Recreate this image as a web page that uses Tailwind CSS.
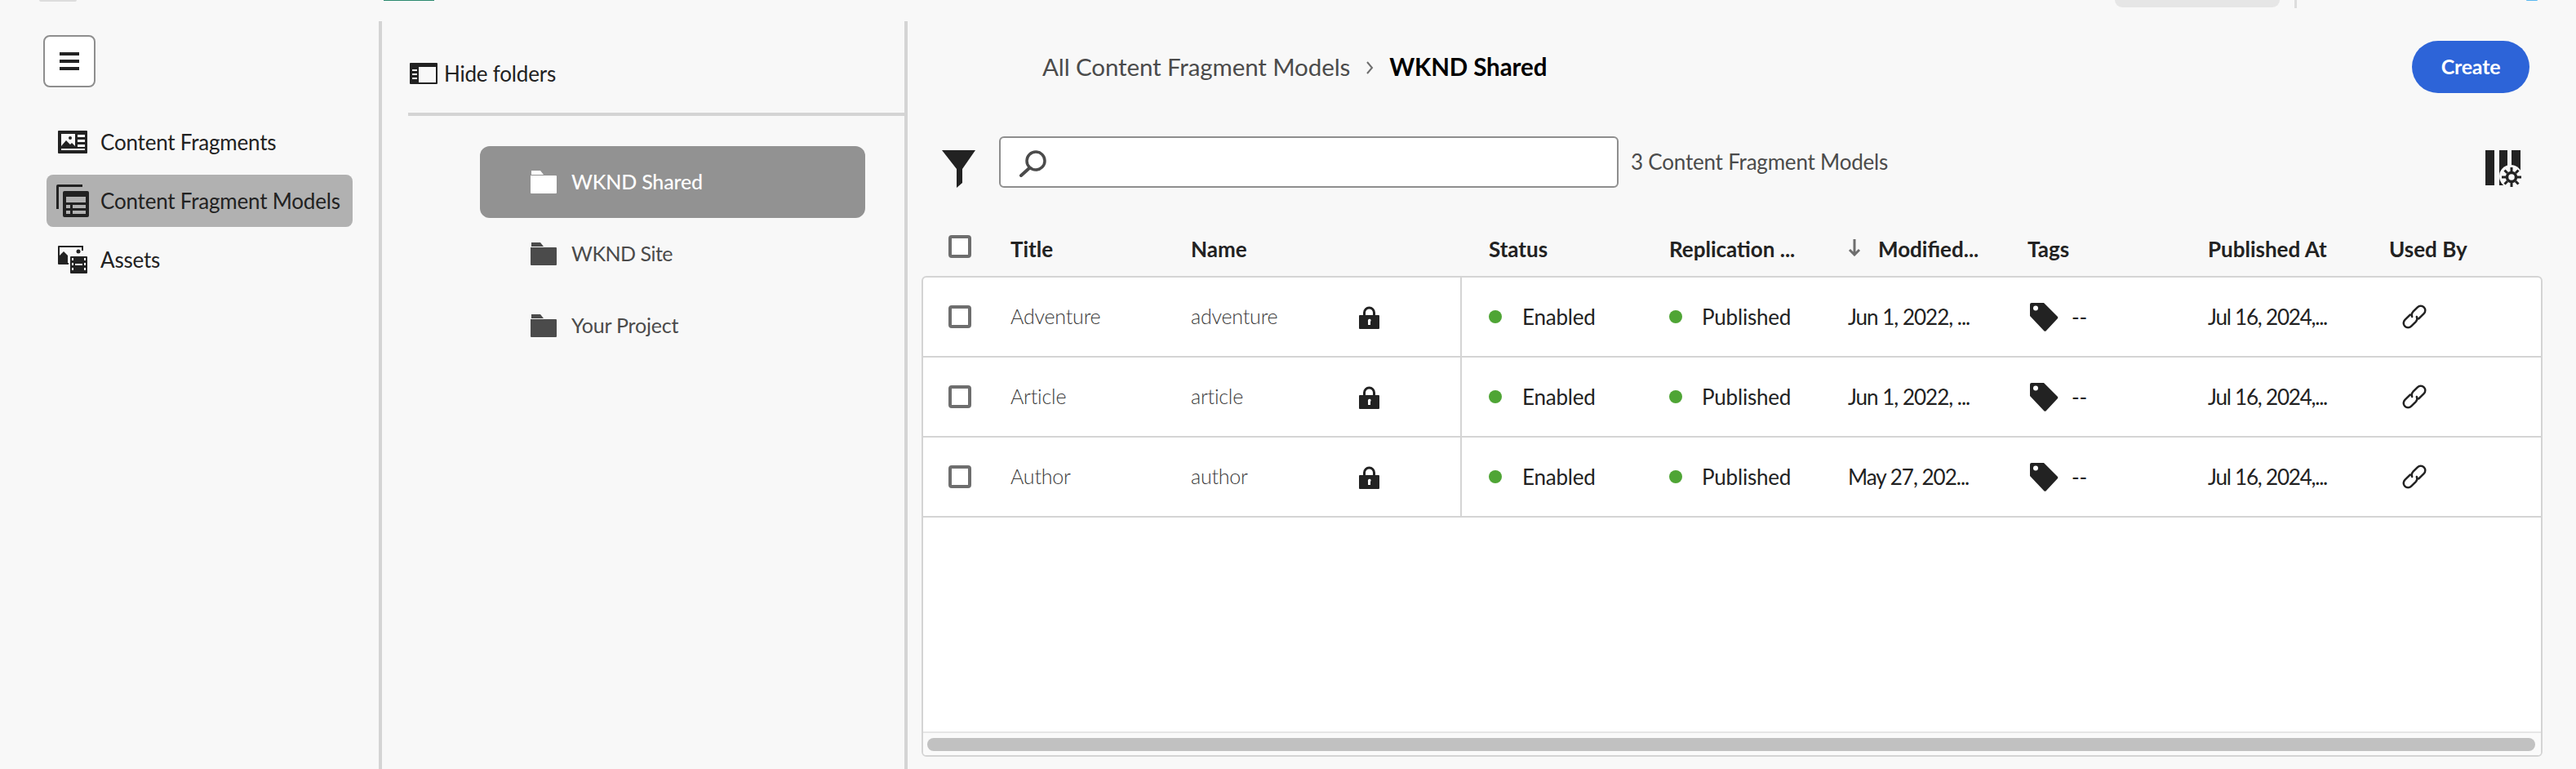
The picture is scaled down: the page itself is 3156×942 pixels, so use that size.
<!DOCTYPE html>
<html lang="en">
<head>
    <meta charset="UTF-8">
    <title>Content Fragment Models</title>
    <script src="https://cdn.jsdelivr.net/npm/@tailwindcss/browser@4"></script>
</head>
<body class="bg-[#f8f8f8] font-['Lato',sans-serif] text-[26px] tracking-[-0.2px] text-[#222222] overflow-hidden">
<div class="relative h-[942px] w-[3156px] overflow-hidden">
    <!-- Top bar leftovers -->
    <div class="absolute left-[48px] top-0 h-[2px] w-[46px] rounded-b bg-[#dddddd]"></div>
    <div class="absolute left-[470px] top-0 h-[1px] w-[62px] bg-[#2d8a6f]"></div>
    <div class="absolute left-[2591px] top-0 h-[9px] w-[202px] rounded-b-[10px] bg-[#e6e6e6]"></div>
    <div class="absolute left-[2811px] top-0 h-[10px] w-[3px] bg-[#dddddd]"></div>
    <div class="absolute left-[3095px] top-0 h-[1px] w-[14px] rounded-b bg-[#5bb8f0]"></div>

    <div class="flex h-full pt-[26px]">
        <!-- Nav rail -->
        <div class="w-[468px] h-full shrink-0 border-r-4 border-[#d4d4d4] pl-[53px] pt-[17px]">
            <button class="flex h-[64px] w-[64px] flex-col items-center justify-center gap-[5px] rounded-lg border-2 border-[#8e8e8e] bg-white">
                <span class="h-[4px] w-[24px] bg-[#222222]"></span>
                <span class="h-[4px] w-[24px] bg-[#222222]"></span>
                <span class="h-[4px] w-[24px] bg-[#222222]"></span>
            </button>
            <ul class="mt-[35px] ml-[4px] flex w-[375px] flex-col gap-[8px]">
                <li class="flex h-[64px] items-center pl-[14px]">
                    <svg class="w-[36px] h-[28px] mr-[16px] shrink-0" viewBox="0 0 36 28"><path fill="#222222" fill-rule="evenodd" d="M1 0h34a1 1 0 0 1 1 1v26a1 1 0 0 1-1 1H1a1 1 0 0 1-1-1V1a1 1 0 0 1 1-1zM4 4v15l6-7 5 5 2-2 4 4V4zM24 5v3h9V5zM24 11v3h9v-3zM24 17v3h9v-3zM4 22v2h29v-2z"/><circle cx="15" cy="9" r="2" fill="#222222"/></svg>
                    <span>Content Fragments</span>
                </li>
                <li class="flex h-[64px] items-center rounded-lg bg-[#b1b1b1] pl-[12px]">
                    <svg class="w-[40px] h-[40px] mr-[14px] shrink-0" viewBox="0 0 40 40"><path fill="#222222" d="M2 0h30v3H3v27H0V2a2 2 0 0 1 2-2z"/><path fill="#222222" fill-rule="evenodd" d="M10 8h28a2 2 0 0 1 2 2v28a2 2 0 0 1-2 2H10a2 2 0 0 1-2-2V10a2 2 0 0 1 2-2zM12 15v7h24v-7zM12 25v4h5v-4zM20 25v4h16v-4zM12 32v4h5v-4zM20 32v4h16v-4z"/></svg>
                    <span>Content Fragment Models</span>
                </li>
                <li class="flex h-[64px] items-center pl-[14px]">
                    <svg class="w-[36px] h-[34px] mr-[16px] shrink-0" viewBox="0 0 36 34"><path fill="#222222" d="M1 0h30v6h-2V2H2v19h11v2H1a1 1 0 0 1-1-1V1a1 1 0 0 1 1-1z"/><path fill="#222222" d="M2 12l5-5 5 5v9H2z"/><circle cx="25" cy="7" r="2.5" fill="#222222"/><path fill="#222222" fill-rule="evenodd" d="M16 13h19a1 1 0 0 1 1 1v19a1 1 0 0 1-1 1H16a1 1 0 0 1-1-1V14a1 1 0 0 1 1-1zM17 15v3h2v-3zM32 15v3h2v-3zM17 21v3h2v-3zM32 21v3h2v-3zM17 27v3h2v-3zM32 27v3h2v-3zM21 22v2h9v-2z"/></svg>
                    <span>Assets</span>
                </li>
            </ul>
        </div>

        <!-- Folders -->
        <div class="w-[644px] h-full shrink-0 border-r-4 border-[#d4d4d4] pl-[32px]">
            <div class="flex h-[116px] items-start border-b-4 border-[#d4d4d4] pt-[51px] pl-[2px]">
                <svg class="w-[34px] h-[26px] mr-[8px] shrink-0" viewBox="0 0 34 26"><path fill="#222222" fill-rule="evenodd" d="M1 0h32a1 1 0 0 1 1 1v24a1 1 0 0 1-1 1H1a1 1 0 0 1-1-1V1a1 1 0 0 1 1-1zM11 5v19h21V5zM3 8v2h6V8zM3 13v2h6v-2zM3 18v2h6v-2z"/></svg>
                <span class="leading-[26px]">Hide folders</span>
            </div>
            <ul class="mt-[37px] ml-[88px] w-[472px] text-[25px]">
                <li class="flex h-[88px] items-center rounded-xl bg-[#929292] pl-[62px] text-white">
                    <svg class="w-[32px] h-[28px] mr-[18px] shrink-0" viewBox="0 0 32 28"><path fill="#ffffff" d="M1 0h11l4 5H1zM0 6h31a1 1 0 0 1 1 1v20a1 1 0 0 1-1 1H1a1 1 0 0 1-1-1z"/></svg>
                    <span class="font-medium">WKND Shared</span>
                </li>
                <li class="flex h-[88px] items-center pl-[62px] text-[#4b4b4b]">
                    <svg class="w-[32px] h-[28px] mr-[18px] shrink-0" viewBox="0 0 32 28"><path fill="#4b4b4b" d="M1 0h11l4 5H1zM0 6h31a1 1 0 0 1 1 1v20a1 1 0 0 1-1 1H1a1 1 0 0 1-1-1z"/></svg>
                    <span class="tracking-[-0.5px]">WKND Site</span>
                </li>
                <li class="flex h-[88px] items-center pl-[62px] text-[#4b4b4b]">
                    <svg class="w-[32px] h-[28px] mr-[18px] shrink-0" viewBox="0 0 32 28"><path fill="#4b4b4b" d="M1 0h11l4 5H1zM0 6h31a1 1 0 0 1 1 1v20a1 1 0 0 1-1 1H1a1 1 0 0 1-1-1z"/></svg>
                    <span>Your Project</span>
                </li>
            </ul>
        </div>

        <!-- Main -->
        <div class="flex-1 h-full flex flex-col pl-[17px]">
            <div class="flex h-[88px] w-[1970px] items-center justify-between pl-[148px] pt-[23px]">
                <div class="flex items-center text-[29.5px] tracking-[-0.1px] mt-[2px]">
                    <span class="text-[#4b4b4b]">All Content Fragment Models</span>
                    <svg class="w-[10px] h-[18px] mx-[19px]" viewBox="0 0 10 18"><path fill="none" stroke="#6e6e6e" stroke-width="2" d="M2 2l6 7-6 7"/></svg>
                    <span class="font-bold text-black">WKND Shared</span>
                </div>
                <button class="h-[64px] w-[144px] rounded-full bg-[#2d64d8] font-bold text-[25px] text-white">Create</button>
            </div>

            <div class="flex w-[1962px] items-center h-[63px] mt-[53px] pl-[25px]">
                <svg class="w-[41px] h-[46px] mr-[29px] mt-[16px] shrink-0" viewBox="0 0 41 46"><path fill="#222222" d="M0 0h41L25 23v17l-7 6V23z"/></svg>
                <div class="flex h-[63px] w-[759px] shrink-0 items-center rounded-md border-2 border-[#8e8e8e] bg-white pl-[22px]">
                    <svg class="w-[34px] h-[33px] mt-[4px]" viewBox="0 0 34 33"><circle cx="21" cy="13" r="11" fill="none" stroke="#4b4b4b" stroke-width="3.5"/><path stroke="#4b4b4b" stroke-width="4" stroke-linecap="round" d="M13 22L3 31"/></svg>
                </div>
                <span class="ml-[15px] text-[26px] text-[#4b4b4b]">3 Content Fragment Models</span>
                <svg class="ml-auto w-[46px] h-[46px] mt-[16px] shrink-0" viewBox="0 0 46 46"><path fill="#222222" d="M0 0h11v43H0zM17 0h10v43H17zM32 0h11v30H32z"/><circle cx="31" cy="32" r="14" fill="#f8f8f8"/><circle cx="32" cy="33" r="5.500" fill="none" stroke="#222222" stroke-width="3.500"/><path stroke="#222222" stroke-width="3" d="M32 21v5M32 40v5M20 33h5M39 33h5M23.500 24.500l3.500 3.500M37 38l3.500 3.500M40.500 24.500l-3.500 3.500M27 38l-3.500 3.500"/></svg>
            </div>

            <!-- Table header -->
            <div class="mt-[42px] ml-[2px] grid h-[66px] grid-cols-[107px_221px_365px_221px_219px_220px_221px_222px_1fr] items-center font-bold tracking-normal">
                <span class="ml-[31px] mb-[6px] block h-[28px] w-[28px] rounded border-4 border-[#6e6e6e] bg-white"></span>
                <span>Title</span>
                <span>Name</span>
                <span>Status</span>
                <span>Replication ...</span>
                <span class="flex items-center">
                    <svg class="w-[16px] h-[22px] mr-[21px] mb-[4px]" viewBox="0 0 16 22"><path fill="none" stroke="#6e6e6e" stroke-width="3" d="M8 1v19M2 14l6 6 6-6"/></svg>
                    Modified...
                </span>
                <span>Tags</span>
                <span>Published At</span>
                <span>Used By</span>
            </div>

            <!-- Table body -->
            <div class="w-[1986px] h-[589px] flex flex-col rounded-md border-2 border-[#d4d4d4] bg-white overflow-hidden">
                <div class="flex-1">
                    <div class="grid h-[98px] grid-cols-[107px_221px_332px_33px_221px_219px_220px_221px_222px_1fr] items-center border-b-2 border-[#d4d4d4]">
                        <span class="ml-[31px] block h-[28px] w-[28px] rounded border-4 border-[#6e6e6e] bg-white"></span>
                        <span class="font-light text-[25px] text-[#3a3a3a]">Adventure</span>
                        <div class="flex h-full items-center border-r-2 border-[#d4d4d4]">
                            <span class="font-light text-[25px] text-[#3a3a3a] w-[206px]">adventure</span>
                            <svg class="w-[25px] h-[30px]" viewBox="0 0 25 30"><path fill="#222222" fill-rule="evenodd" d="M5 13V10a7.500 7.500 0 0 1 15 0v3h4a1 1 0 0 1 1 1v15a1 1 0 0 1-1 1H1a1 1 0 0 1-1-1V14a1 1 0 0 1 1-1zM8 13h9V10a4.500 4.500 0 0 0-9 0zM11 19.500a1.800 1.800 0 1 1 3 1.300V25h-3v-4.200a1.800 1.800 0 0 1 0-1.300z"/></svg>
                        </div>
                        <span></span>
                        <span class="flex items-center"><i class="block h-[16px] w-[16px] rounded-full bg-[#4fa535] mr-[25px]"></i>Enabled</span>
                        <span class="flex items-center"><i class="block h-[16px] w-[16px] rounded-full bg-[#4fa535] mr-[24px]"></i>Published</span>
                        <span class="tracking-[-1px]">Jun 1, 2022, ...</span>
                        <span class="flex items-center">
                            <svg class="ml-[3px] w-[35px] h-[35px] mr-[16px] shrink-0" viewBox="0 0 35 35"><path fill="#222222" fill-rule="evenodd" d="M2 0h15l17 17a2 2 0 0 1 0 2L20 34a2 2 0 0 1-3 0L0 16V2a2 2 0 0 1 2-2zM7 3.500a3 3 0 1 0 0 6 3 3 0 0 0 0-6z"/></svg>--
                        </span>
                        <span class="tracking-[-1.200px]">Jul 16, 2024,...</span>
                        <svg class="ml-[15px] w-[32px] h-[32px]" viewBox="0 0 32 32"><g transform="rotate(-45 16 16)"><path fill="none" stroke="#222222" stroke-width="2.500" stroke-linecap="round" d="M14 10.500H5a5.500 5.500 0 0 0 0 11h8a5.500 5.500 0 0 0 5-3.500M18 21.500h9a5.500 5.500 0 0 0 0-11h-8a5.500 5.500 0 0 0-5 3.500"/></g></svg>
                    </div>
                    <div class="grid h-[98px] grid-cols-[107px_221px_332px_33px_221px_219px_220px_221px_222px_1fr] items-center border-b-2 border-[#d4d4d4]">
                        <span class="ml-[31px] block h-[28px] w-[28px] rounded border-4 border-[#6e6e6e] bg-white"></span>
                        <span class="font-light text-[25px] text-[#3a3a3a]">Article</span>
                        <div class="flex h-full items-center border-r-2 border-[#d4d4d4]">
                            <span class="font-light text-[25px] text-[#3a3a3a] w-[206px]">article</span>
                            <svg class="w-[25px] h-[30px]" viewBox="0 0 25 30"><path fill="#222222" fill-rule="evenodd" d="M5 13V10a7.500 7.500 0 0 1 15 0v3h4a1 1 0 0 1 1 1v15a1 1 0 0 1-1 1H1a1 1 0 0 1-1-1V14a1 1 0 0 1 1-1zM8 13h9V10a4.500 4.500 0 0 0-9 0zM11 19.500a1.800 1.800 0 1 1 3 1.300V25h-3v-4.200a1.800 1.800 0 0 1 0-1.300z"/></svg>
                        </div>
                        <span></span>
                        <span class="flex items-center"><i class="block h-[16px] w-[16px] rounded-full bg-[#4fa535] mr-[25px]"></i>Enabled</span>
                        <span class="flex items-center"><i class="block h-[16px] w-[16px] rounded-full bg-[#4fa535] mr-[24px]"></i>Published</span>
                        <span class="tracking-[-1px]">Jun 1, 2022, ...</span>
                        <span class="flex items-center">
                            <svg class="ml-[3px] w-[35px] h-[35px] mr-[16px] shrink-0" viewBox="0 0 35 35"><path fill="#222222" fill-rule="evenodd" d="M2 0h15l17 17a2 2 0 0 1 0 2L20 34a2 2 0 0 1-3 0L0 16V2a2 2 0 0 1 2-2zM7 3.500a3 3 0 1 0 0 6 3 3 0 0 0 0-6z"/></svg>--
                        </span>
                        <span class="tracking-[-1.200px]">Jul 16, 2024,...</span>
                        <svg class="ml-[15px] w-[32px] h-[32px]" viewBox="0 0 32 32"><g transform="rotate(-45 16 16)"><path fill="none" stroke="#222222" stroke-width="2.500" stroke-linecap="round" d="M14 10.500H5a5.500 5.500 0 0 0 0 11h8a5.500 5.500 0 0 0 5-3.500M18 21.500h9a5.500 5.500 0 0 0 0-11h-8a5.500 5.500 0 0 0-5 3.500"/></g></svg>
                    </div>
                    <div class="grid h-[98px] grid-cols-[107px_221px_332px_33px_221px_219px_220px_221px_222px_1fr] items-center border-b-2 border-[#d4d4d4]">
                        <span class="ml-[31px] block h-[28px] w-[28px] rounded border-4 border-[#6e6e6e] bg-white"></span>
                        <span class="font-light text-[25px] text-[#3a3a3a]">Author</span>
                        <div class="flex h-full items-center border-r-2 border-[#d4d4d4]">
                            <span class="font-light text-[25px] text-[#3a3a3a] w-[206px]">author</span>
                            <svg class="w-[25px] h-[30px]" viewBox="0 0 25 30"><path fill="#222222" fill-rule="evenodd" d="M5 13V10a7.500 7.500 0 0 1 15 0v3h4a1 1 0 0 1 1 1v15a1 1 0 0 1-1 1H1a1 1 0 0 1-1-1V14a1 1 0 0 1 1-1zM8 13h9V10a4.500 4.500 0 0 0-9 0zM11 19.500a1.800 1.800 0 1 1 3 1.300V25h-3v-4.200a1.800 1.800 0 0 1 0-1.300z"/></svg>
                        </div>
                        <span></span>
                        <span class="flex items-center"><i class="block h-[16px] w-[16px] rounded-full bg-[#4fa535] mr-[25px]"></i>Enabled</span>
                        <span class="flex items-center"><i class="block h-[16px] w-[16px] rounded-full bg-[#4fa535] mr-[24px]"></i>Published</span>
                        <span class="tracking-[-1px]">May 27, 202...</span>
                        <span class="flex items-center">
                            <svg class="ml-[3px] w-[35px] h-[35px] mr-[16px] shrink-0" viewBox="0 0 35 35"><path fill="#222222" fill-rule="evenodd" d="M2 0h15l17 17a2 2 0 0 1 0 2L20 34a2 2 0 0 1-3 0L0 16V2a2 2 0 0 1 2-2zM7 3.500a3 3 0 1 0 0 6 3 3 0 0 0 0-6z"/></svg>--
                        </span>
                        <span class="tracking-[-1.200px]">Jul 16, 2024,...</span>
                        <svg class="ml-[15px] w-[32px] h-[32px]" viewBox="0 0 32 32"><g transform="rotate(-45 16 16)"><path fill="none" stroke="#222222" stroke-width="2.500" stroke-linecap="round" d="M14 10.500H5a5.500 5.500 0 0 0 0 11h8a5.500 5.500 0 0 0 5-3.500M18 21.500h9a5.500 5.500 0 0 0 0-11h-8a5.500 5.500 0 0 0-5 3.500"/></g></svg>
                    </div>
                </div>
                <!-- Scrollbar -->
                <div class="h-[29px] border-t-2 border-[#e6e6e6] bg-[#fafafa] pl-[5px] pr-[7px] pt-[6px]">
                    <div class="h-[16px] w-full rounded-full bg-[#c1c1c1]"></div>
                </div>
            </div>
        </div>
    </div>
</div>
</body>
</html>
